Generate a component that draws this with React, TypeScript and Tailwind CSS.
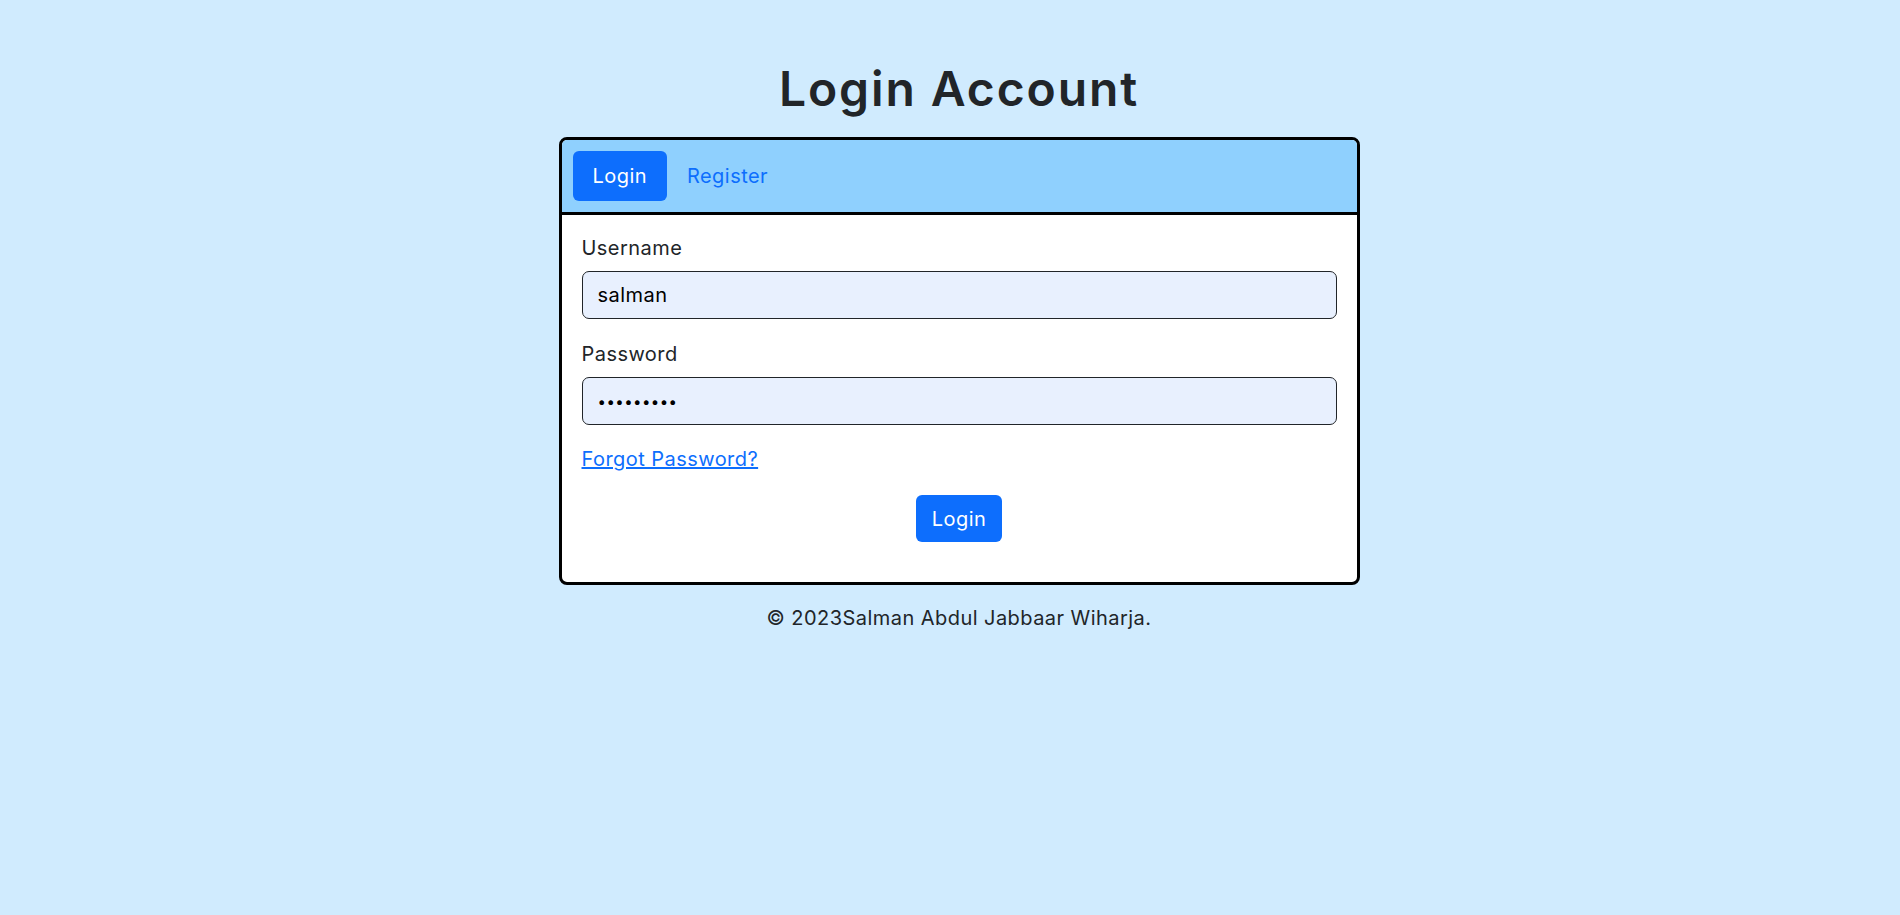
import React, { useState } from "react";

const App: React.FC = () => {
  const [tab, setTab] = useState<"login" | "register">("login");
  const [username, setUsername] = useState("salman");
  const [password, setPassword] = useState("123456789");

  return (
    <div className="min-h-screen bg-[#d0ebfe] font-['Inter',sans-serif] text-[#212529] tracking-[0.45px]">
      <div className="flex flex-col items-center pl-[18px] pt-[60px]">
        <h1 className="text-[48px] leading-[58px] font-semibold tracking-[1.9px]">Login Account</h1>

        <div className="mt-[19px] w-[801px] rounded-lg border-[3px] border-black bg-white overflow-hidden">
          <div className="flex items-center gap-5 bg-[#8fd0fe] p-[11px] border-b-[3px] border-black">
            <button
              onClick={() => setTab("login")}
              className={
                tab === "login"
                  ? "h-[50px] px-5 rounded-md bg-[#0d6efd] text-white text-xl"
                  : "h-[50px] px-5 rounded-md text-[#0d6efd] text-xl"
              }
            >
              Login
            </button>
            <button
              onClick={() => setTab("register")}
              className={
                tab === "register"
                  ? "h-[50px] px-5 rounded-md bg-[#0d6efd] text-white text-xl"
                  : "h-[50px] text-[#0d6efd] text-xl"
              }
            >
              Register
            </button>
          </div>

          <div className="px-5 pt-[18px] pb-5">
            <label className="block text-xl leading-[30px] mb-2">Username</label>
            <input
              value={username}
              onChange={(e) => setUsername(e.target.value)}
              className="block w-full h-[48px] px-[15px] rounded-[7px] border border-[#212529] bg-[#e8f0fe] text-xl text-black tracking-[0.45px] outline-none"
            />

            <label className="block mt-5 text-xl leading-[30px] mb-2">Password</label>
            <input
              type="password"
              value={password}
              onChange={(e) => setPassword(e.target.value)}
              className="block w-full h-[48px] px-[15px] rounded-[7px] border border-[#212529] bg-[#e8f0fe] text-[15px] text-black outline-none"
            />

            <a href="#" className="block mt-[19px] w-fit text-xl leading-[30px] text-[#0d6efd] underline">
              Forgot Password?
            </a>

            <div className="flex justify-center mt-[21px] mb-5">
              <button className="h-[47px] px-4 rounded-md bg-[#0d6efd] text-white text-xl">
                Login
              </button>
            </div>
          </div>
        </div>

        <p className="mt-[18px] text-xl leading-[30px]">© 2023Salman Abdul Jabbaar Wiharja.</p>
      </div>
    </div>
  );
};

export default App;
